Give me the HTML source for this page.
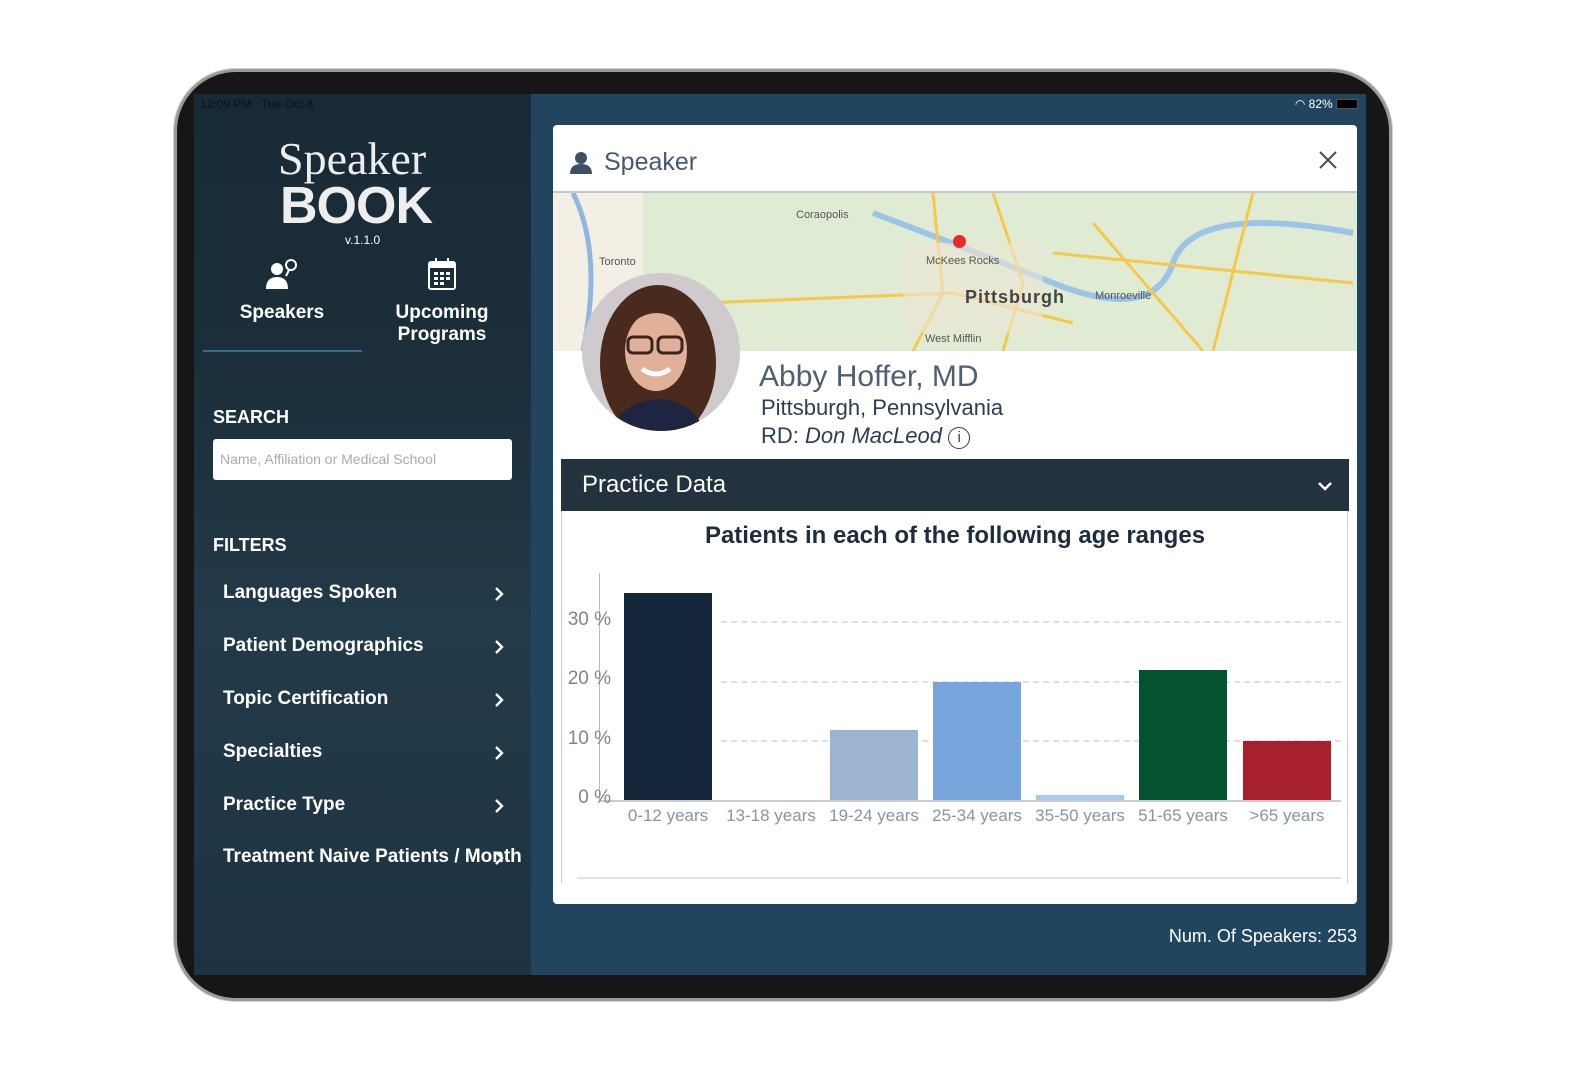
<!DOCTYPE html>
<html><head><meta charset="utf-8"><style>
*{margin:0;padding:0;box-sizing:border-box}
body{width:1587px;height:1086px;background:#fff;position:relative;overflow:hidden;font-family:"Liberation Sans",sans-serif}
.abs{position:absolute}
.frame{left:174px;top:69px;width:1218px;height:932px;border-radius:62px;background:#161616;border:3px solid #9a9a9a;box-shadow:0 0 0 1px #d0d0d0}
.screen{left:194px;top:94px;width:1172px;height:881px;background:#21455e;overflow:hidden}
.side{left:0;top:0;width:337px;height:881px;background:linear-gradient(#182a35 0,#1b2e3a 30%,#233a48 60%,#1d3342 100%)}
.w{color:#fff}
.filter{left:29px;font-size:19px;font-weight:bold;color:#fff}
.chev{left:299px}
.card{left:359px;top:31px;width:804px;height:779px;background:#fff;border-radius:4px;overflow:hidden}
.ylab{font-size:19px;color:#7b8591;width:50px;text-align:right}
.xlab{font-size:17px;color:#8a93a0;width:104px;text-align:center;top:681px}
.grid{height:0;border-top:2px dashed #dcdfe4}
</style></head><body>
<div class="abs frame"></div>
<div class="abs screen">
 <div class="abs side">
  <div class="abs" style="left:6px;top:3px;font-size:12px;color:#0b1419">12:09 PM &nbsp; Tue Oct 8</div>
  <div class="abs w" style="left:84px;top:38px;font-family:'Liberation Serif',serif;font-size:46px;color:#eee">Speaker</div>
  <div class="abs" style="left:86px;top:82px;font-size:52px;font-weight:900;color:#eee;letter-spacing:-1px">BOOK</div>
  <div class="abs w" style="left:151px;top:139px;font-size:12px">v.1.1.0</div>
  <svg class="abs" style="left:70px;top:163px" width="36" height="34"><circle cx="13" cy="12" r="6" fill="#fff"/><circle cx="27" cy="8" r="5" fill="none" stroke="#fff" stroke-width="2"/><path d="M25 13l-3 6" stroke="#fff" stroke-width="2"/><path d="M2 32q0-12 11-12t11 12z" fill="#fff"/></svg>
  <svg class="abs" style="left:234px;top:164px" width="28" height="32"><rect x="1" y="4" width="26" height="27" rx="2" fill="none" stroke="#fff" stroke-width="2"/><rect x="1" y="4" width="26" height="6" fill="#fff"/><rect x="7" y="0" width="2" height="7" fill="#fff"/><rect x="19" y="0" width="2" height="7" fill="#fff"/><g fill="#fff"><rect x="6" y="14" width="4" height="3"/><rect x="12" y="14" width="4" height="3"/><rect x="18" y="14" width="4" height="3"/><rect x="6" y="19" width="4" height="3"/><rect x="12" y="19" width="4" height="3"/><rect x="18" y="19" width="4" height="3"/><rect x="6" y="24" width="4" height="3"/><rect x="12" y="24" width="4" height="3"/></g></svg>
  <div class="abs w" style="left:30px;top:208px;width:116px;text-align:center;font-size:19px;font-weight:bold">Speakers</div>
  <div class="abs w" style="left:190px;top:208px;width:116px;text-align:center;font-size:19px;font-weight:bold;line-height:22px">Upcoming Programs</div>
  <div class="abs" style="left:9px;top:256px;width:159px;height:2px;background:#2f6d95"></div>
  <div class="abs w" style="left:19px;top:313px;font-size:18px;font-weight:bold">SEARCH</div>
  <div class="abs" style="left:19px;top:345px;width:299px;height:41px;background:#fff;border-radius:3px;font-size:14px;color:#aaa;padding:12px 7px">Name, Affiliation or Medical School</div>
  <div class="abs w" style="left:19px;top:441px;font-size:18px;font-weight:bold">FILTERS</div>
  <div class="abs filter" style="top:488px">Languages Spoken</div>
  <div class="abs filter" style="top:541px">Patient Demographics</div>
  <div class="abs filter" style="top:594px">Topic Certification</div>
  <div class="abs filter" style="top:647px">Specialties</div>
  <div class="abs filter" style="top:700px">Practice Type</div>
  <div class="abs filter" style="top:752px">Treatment Naive Patients / Month</div>
  <svg class="abs chev" style="top:492px" width="12" height="16"><path d="M3 2l6 6-6 6" stroke="#fff" stroke-width="2.4" fill="none"/></svg>
  <svg class="abs chev" style="top:545px" width="12" height="16"><path d="M3 2l6 6-6 6" stroke="#fff" stroke-width="2.4" fill="none"/></svg>
  <svg class="abs chev" style="top:598px" width="12" height="16"><path d="M3 2l6 6-6 6" stroke="#fff" stroke-width="2.4" fill="none"/></svg>
  <svg class="abs chev" style="top:651px" width="12" height="16"><path d="M3 2l6 6-6 6" stroke="#fff" stroke-width="2.4" fill="none"/></svg>
  <svg class="abs chev" style="top:704px" width="12" height="16"><path d="M3 2l6 6-6 6" stroke="#fff" stroke-width="2.4" fill="none"/></svg>
  <svg class="abs chev" style="top:756px" width="12" height="16"><path d="M3 2l6 6-6 6" stroke="#fff" stroke-width="2.4" fill="none"/></svg>
 </div>
 <div class="abs" style="right:8px;top:3px;font-size:12px;color:#fff">&#x25E0; 82% <span style="display:inline-block;width:22px;height:10px;background:#000;border:1px solid #555;border-radius:2px;vertical-align:-1px"></span></div>
 <div class="abs card">
  <svg class="abs" style="left:12px;top:25px" width="30" height="24"><circle cx="16" cy="8" r="6" fill="#3d5166"/><path d="M5 24q0-10 11-10t11 10z" fill="#3d5166"/></svg>
  <div class="abs" style="left:51px;top:23px;font-size:25px;color:#455a70">Speaker</div>
  <svg class="abs" style="left:765px;top:25px" width="20" height="20"><path d="M2 2L18 18M18 2L2 18" stroke="#3d4f63" stroke-width="2"/></svg>
  <div class="abs" style="left:0;top:66px;width:804px;height:2px;background:#c3c7cb"></div>
  <div class="abs" style="left:0;top:68px;width:804px;height:158px;background:#dfecd3">
   <svg width="804" height="158" style="position:absolute;left:0;top:0">
    <rect x="0" y="0" width="90" height="158" fill="#f3efe4"/>
    <path d="M20 0 Q50 60 30 158" stroke="#8fb8e0" stroke-width="5" fill="none"/>
    <path d="M320 20 Q400 50 500 90 T620 70 T800 40" stroke="#9cc4e6" stroke-width="6" fill="none"/>
    <path d="M380 0 L390 100 L360 158 M150 110 L400 100 L520 130 M440 0 L470 90 L450 158 M540 30 L600 100 L650 158 M500 60 L800 90 M700 0 L660 158" stroke="#f6c84a" stroke-width="3" fill="none"/>
    <rect x="350" y="50" width="140" height="90" fill="#ece6d6" opacity=".6"/>
   </svg>
   <div class="abs" style="left:400px;top:42px;width:13px;height:13px;border-radius:50%;background:#e52b2b"></div>
   <div class="abs" style="left:412px;top:94px;font-size:18px;font-weight:bold;color:#444;letter-spacing:1px">Pittsburgh</div>
   <div class="abs" style="left:243px;top:16px;font-size:11px;color:#555">Coraopolis</div>
   <div class="abs" style="left:46px;top:63px;font-size:11px;color:#555">Toronto</div>
   <div class="abs" style="left:373px;top:62px;font-size:11px;color:#555">McKees Rocks</div>
   <div class="abs" style="left:542px;top:97px;font-size:11px;color:#555">Monroeville</div>
   <div class="abs" style="left:372px;top:140px;font-size:11px;color:#555">West Mifflin</div>
  </div>
  <svg class="abs" style="left:29px;top:148px" width="158" height="158"><defs><clipPath id="c"><circle cx="79" cy="79" r="79"/></clipPath></defs><g clip-path="url(#c)"><rect width="158" height="158" fill="#cfcacd"/><ellipse cx="76" cy="90" rx="58" ry="78" fill="#4a2a1c"/><path d="M30 158q10-30 46-32q36 2 46 32z" fill="#1d2540"/><ellipse cx="74" cy="78" rx="31" ry="40" fill="#e0b098"/><path d="M40 60q34-40 70 0q-10-40-36-40q-28 0-34 40z" fill="#4a2a1c"/><rect x="46" y="64" width="24" height="16" rx="5" fill="none" stroke="#3a2420" stroke-width="3"/><rect x="76" y="64" width="24" height="16" rx="5" fill="none" stroke="#3a2420" stroke-width="3"/><path d="M60 96q14 10 28 0" stroke="#fff" stroke-width="5" fill="none"/></g></svg>
  <div class="abs" style="left:206px;top:235px;font-size:30px;color:#4d5f73">Abby Hoffer, MD</div>
  <div class="abs" style="left:208px;top:270px;font-size:22px;color:#2d3e52">Pittsburgh, Pennsylvania</div>
  <div class="abs" style="left:208px;top:298px;font-size:22px;color:#2d3e52">RD: <i>Don MacLeod</i> <span style="display:inline-block;width:22px;height:22px;border:1.5px solid #2d3e52;border-radius:50%;font-size:15px;text-align:center;line-height:19px;vertical-align:1px">i</span></div>
  <div class="abs" style="left:8px;top:334px;width:788px;height:52px;background:#23323e"></div>
  <div class="abs w" style="left:29px;top:346px;font-size:24px">Practice Data</div>
  <svg class="abs" style="left:764px;top:355px" width="16" height="12"><path d="M2 3l6 6 6-6" stroke="#fff" stroke-width="2.5" fill="none"/></svg>
  <div class="abs" style="left:8px;top:386px;width:1px;height:372px;background:#ccc"></div>
  <div class="abs" style="left:794px;top:386px;width:1px;height:372px;background:#ccc"></div>
  <div class="abs" style="left:24px;top:752px;width:764px;height:2px;background:#e4e4e4"></div>
  <div class="abs" style="left:0;top:397px;width:804px;text-align:center;font-size:24px;font-weight:bold;color:#1d2d3d">Patients in each of the following age ranges</div>
  <div class="abs" style="left:46px;top:448px;width:1px;height:228px;background:#bbb"></div>
  <div class="abs grid" style="left:168px;top:496px;width:620px"></div>
  <div class="abs grid" style="left:168px;top:556px;width:620px"></div>
  <div class="abs grid" style="left:168px;top:615px;width:620px"></div>
  <div class="abs" style="left:46px;top:675px;width:742px;height:2px;background:#ccc"></div>
  <div class="abs ylab" style="left:8px;top:484px">30 %</div>
  <div class="abs ylab" style="left:8px;top:543px">20 %</div>
  <div class="abs ylab" style="left:8px;top:603px">10 %</div>
  <div class="abs ylab" style="left:8px;top:662px">0 %</div>
  <div class="abs" style="left:71px;top:468px;width:88px;height:207px;background:#14263a"></div>
  <div class="abs" style="left:277px;top:605px;width:88px;height:70px;background:#9db4d0"></div>
  <div class="abs" style="left:380px;top:557px;width:88px;height:118px;background:#77a6dc"></div>
  <div class="abs" style="left:483px;top:670px;width:88px;height:5px;background:#a8c9ef"></div>
  <div class="abs" style="left:586px;top:545px;width:88px;height:130px;background:#055230"></div>
  <div class="abs" style="left:690px;top:616px;width:88px;height:59px;background:#a81f2d"></div>
  <div class="abs xlab" style="left:63px">0-12 years</div>
  <div class="abs xlab" style="left:166px">13-18 years</div>
  <div class="abs xlab" style="left:269px">19-24 years</div>
  <div class="abs xlab" style="left:372px">25-34 years</div>
  <div class="abs xlab" style="left:475px">35-50 years</div>
  <div class="abs xlab" style="left:578px">51-65 years</div>
  <div class="abs xlab" style="left:682px">&gt;65 years</div>
 </div>
 <div class="abs w" style="right:9px;top:832px;font-size:18px">Num. Of Speakers: 253</div>
</div>
</body></html>
